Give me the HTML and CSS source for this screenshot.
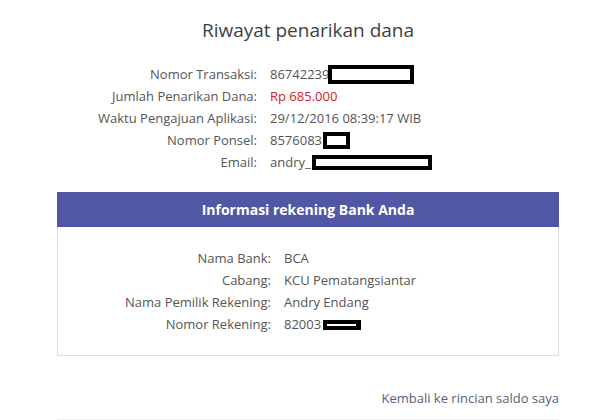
FILE: index.html
```html
<!DOCTYPE html>
<html lang="id">
<head>
    <meta charset="UTF-8">
    <meta name="viewport" content="width=device-width, initial-scale=1.0">
    <title>Riwayat penarikan dana</title>
    <link rel="stylesheet" href="styles.css">
</head>
<body>
    <main class="page">
        <h1 class="title">Riwayat penarikan dana</h1>

        <dl class="details">
            <dt>Nomor Transaksi:</dt>
            <dd>86742239<span class="redact redact-trx"></span></dd>
            <dt>Jumlah Penarikan Dana:</dt>
            <dd class="amount">Rp 685.000</dd>
            <dt>Waktu Pengajuan Aplikasi:</dt>
            <dd>29/12/2016 08:39:17 WIB</dd>
            <dt>Nomor Ponsel:</dt>
            <dd>8576083<span class="redact redact-phone"></span></dd>
            <dt>Email:</dt>
            <dd>andry_<span class="redact redact-email"></span></dd>
        </dl>

        <section class="bank-box">
            <h2 class="bank-head">Informasi rekening Bank Anda</h2>
            <dl class="details bank">
                <dt>Nama Bank:</dt>
                <dd>BCA</dd>
                <dt>Cabang:</dt>
                <dd>KCU Pematangsiantar</dd>
                <dt>Nama Pemilik Rekening:</dt>
                <dd>Andry Endang</dd>
                <dt>Nomor Rekening:</dt>
                <dd>82003<span class="redact redact-acc"></span></dd>
            </dl>
        </section>

        <div class="back">
            <a href="#">Kembali ke rincian saldo saya</a>
        </div>
    </main>
</body>
</html>
```

FILE: styles.css
```css
* {
    margin: 0;
    padding: 0;
    box-sizing: border-box;
}
body {
    background: #fff;
    font-family: "Open Sans", Arial, sans-serif;
    color: #555;
    font-size: 13px;
}
.page {
    width: 502px;
    margin-left: 57px;
    padding-top: 17px;
    border-bottom: 1px solid #eee;
    padding-bottom: 10px;
}
.title {
    font-size: 19px;
    font-weight: 400;
    line-height: 26px;
    color: #3f3f3f;
    text-align: center;
    margin-bottom: 20px;
}
.details {
    display: grid;
    grid-template-columns: 200px 1fr;
    column-gap: 13px;
    line-height: 22px;
}
.details dt {
    text-align: right;
}
.details dd {
    white-space: nowrap;
}
.amount {
    color: #d0202a;
}
.redact {
    display: inline-block;
    vertical-align: middle;
    background: #fff;
    border: 4px solid #000;
    margin-top: -3px;
}
.redact-trx {
    width: 86px;
    height: 19px;
    margin-left: -1px;
}
.redact-phone {
    width: 27px;
    height: 17px;
    margin-left: 1px;
}
.redact-email {
    width: 120px;
    height: 15px;
    margin-left: 1px;
}
.redact-acc {
    width: 38px;
    height: 10px;
    margin-left: 2px;
    margin-top: -1px;
    border-width: 4px 5px 4px 4px;
}
.bank-box {
    margin-top: 19px;
    border: 1px solid #ddd;
    border-top: none;
    padding-bottom: 20px;
}
.bank-head {
    background: #5157a5;
    color: #fff;
    font-size: 14px;
    font-weight: 700;
    line-height: 35px;
    text-align: center;
    margin: 0 -1px 20px;
}
.bank {
    grid-template-columns: 213px 1fr;
}
.back {
    margin-top: 31px;
    text-align: right;
    line-height: 22px;
}
.back a {
    color: #5a6078;
    text-decoration: none;
}
```
